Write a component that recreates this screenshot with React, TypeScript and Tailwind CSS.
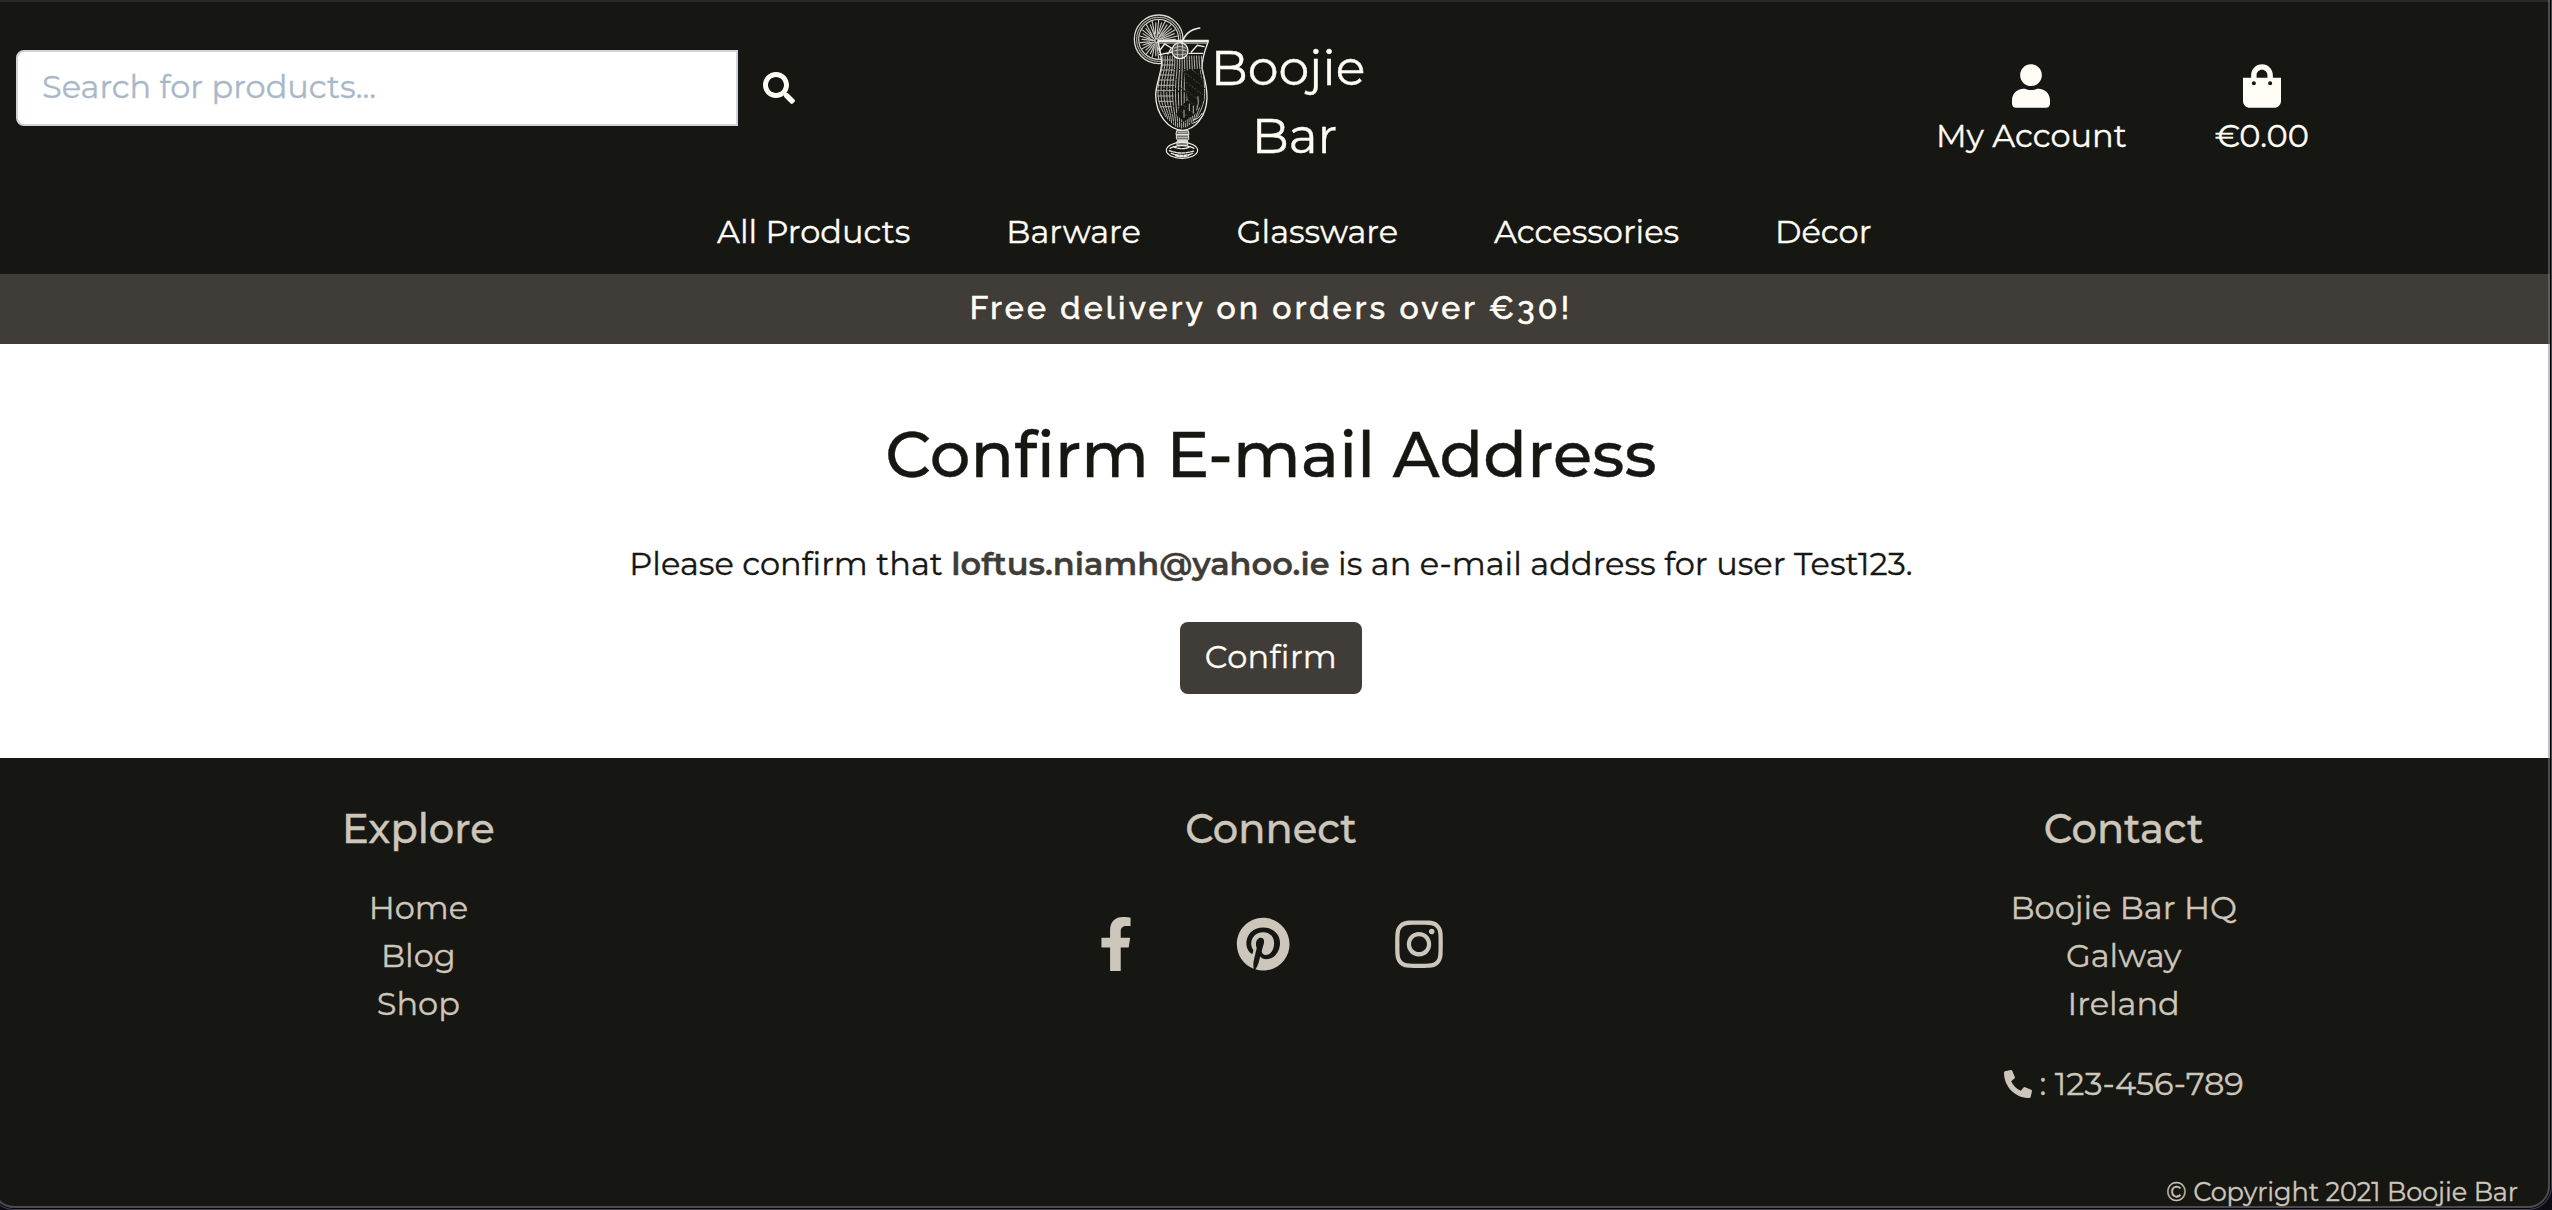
import { FaFacebookF, FaInstagram, FaPhoneAlt, FaPinterest, FaSearch, FaShoppingBag, FaUser } from "react-icons/fa";

const NAV = ["All Products", "Barware", "Glassware", "Accessories", "Décor"];

const rays = Array.from({ length: 36 }, (_, i) => {
  const a = (i / 36) * Math.PI * 2;
  const r0 = 5 + (i % 3) * 8;
  const r1 = 50 + (i % 2) * 7;
  return { x1: 140 + r0 * Math.cos(a), y1: 122 + r0 * Math.sin(a), x2: 146 + r1 * Math.cos(a), y2: 118 + r1 * Math.sin(a) };
});

// Vertical hatching inside the glass, following the hurricane shape
const hatch = Array.from({ length: 17 }, (_, i) => {
  const t = i / 16;
  const top = 158 + t * 116;
  const mid = 144 + t * 140;
  const low = 190 + t * 52;
  const end = 350 + 34 * Math.sin(t * Math.PI);
  return `M${top} 168 C${top + 2} 215 ${mid} 225 ${mid} 280 C${mid} 320 ${(mid + low) / 2} 345 ${(mid + low) / 2} ${end}`;
});

const dots = Array.from({ length: 90 }, (_, i) => ({
  x: 212 + ((i * 37) % 66),
  y: 210 + ((i * 53) % 150),
}));

function Cocktail() {
  return (
    <svg viewBox="66 36 240 450" className="h-[150px] w-[80px] shrink-0" fill="none" stroke="#eeece6" strokeLinecap="round">
      <circle cx="146" cy="118" r="73" strokeWidth="4" stroke="#dad8d2" />
      <circle cx="146" cy="118" r="66" strokeWidth="4" stroke="#9c9b95" strokeDasharray="5 3" />
      <circle cx="146" cy="118" r="60" strokeWidth="3.5" stroke="#cfcdc7" />
      {rays.map((r, i) => (
        <line key={i} {...r} strokeWidth="3.4" stroke="#cac8c2" />
      ))}
      <path d="M144 124 H295 C285 150 276 170 276 205 C282 235 292 255 291 295 C289 350 255 388 218 391 C175 388 138 345 137 285 C138 250 153 225 155 190 C154 165 148 145 144 124Z" fill="#161613" strokeWidth="4" />
      <path d="M144 121 H295 M146 129 H291" strokeWidth="3.5" />
      <path d="M148 164 L188 156 M237 160 H278 M150 150 l14 -18 20 12 -10 18 M244 156 l18 -20 20 4" strokeWidth="4" />
      {hatch.map((d, i) => (
        <path key={i} d={d} strokeWidth="2.8" stroke="#bebcb6" strokeDasharray={i % 2 ? "38 5 60 7" : "70 4 22 5"} />
      ))}
      <path d="M222 212 L268 206 278 250 281 300 258 340 222 365 200 345 208 322 234 300 226 262Z" fill="#161613" stroke="none" />
      <path d="M238 312 v20 M222 330 v22 M264 290 q4 20 -4 40 M250 318 v22" strokeWidth="2.8" stroke="#bebcb6" />
      {dots.map((d, i) => (
        <circle key={i} cx={d.x} cy={d.y} r="1.2" fill="#85847d" stroke="none" />
      ))}
      <path d="M156 180 h34 M156 195 h34 M154 210 h38 M152 225 h40 M148 240 h44 M144 256 h48 M143 272 h48 M143 288 h46 M146 304 h42 M150 320 h34" strokeWidth="3" stroke="#b3b1ab" />
      <path d="M250 360 q18 -4 26 -20 M248 370 q20 -6 32 -26" strokeWidth="2.8" />
      <circle cx="210" cy="152" r="24" fill="#4d4c48" strokeWidth="4" />
      <path d="M192 145 q18 -12 36 0 M190 153 q20 -8 40 0 M193 162 q18 6 34 0 M203 131 q-4 20 0 42 M217 131 q4 20 0 42" strokeWidth="2" />
      <path d="M216 130 C222 106 240 88 269 84" strokeWidth="5" />
      <path d="M201 392 h34 l2 12 h-38z M199 406 q-2 10 4 16 h30 q6 -6 2 -16z M202 424 h31 v12 h-31z" strokeWidth="3" fill="#6b6a65" />
      <path d="M205 398 h26 M204 412 h28 M206 418 h24" strokeWidth="2" />
      <ellipse cx="216" cy="451" rx="47" ry="24" strokeWidth="3.5" />
      <path d="M180 445 q36 -16 72 0 M178 452 q38 14 76 0 M184 460 q32 12 64 0 M196 467 q20 6 40 0 M190 440 q26 12 52 0" strokeWidth="4" strokeDasharray="9 4" />
    </svg>
  );
}

export default function App() {
  return (
    <div className="relative flex h-[1210px] w-[2552px] flex-col overflow-hidden bg-white font-['Montserrat','Inter',sans-serif] text-[32px] leading-[48px] text-[#161613] [-webkit-text-stroke:0.35px] [font-variant-ligatures:none]">
      <header className="h-[274px] shrink-0 border-t-2 border-[#2a2a2a] bg-[#161613] text-[#fffdf5]">
        <div className="flex h-[206px] items-start">
          <div className="ml-4 mt-12 flex items-center">
            <div className="flex h-[76px] w-[722px] items-center rounded-l-[8px] border-2 border-[#ced4da] bg-white pb-[2px] pl-6 text-[#a9b8c9]">
              Search for products...
            </div>
            <FaSearch className="ml-[25px] size-8" />
          </div>
          <div className="ml-[337px] mt-[10px] flex items-start">
            <Cocktail />
            <div className="-ml-1 mt-[22px] w-[160px] text-center text-[49px] leading-[68px]">
              <div>Boojie</div>
              <div className="pl-[13px]">Bar</div>
            </div>
          </div>
          <div className="ml-[568px] mt-[62px] flex gap-[88px]">
            <div className="flex flex-col items-center">
              <FaUser className="mb-1 h-[44px] w-[38px]" />
              <span className="whitespace-nowrap">My Account</span>
            </div>
            <div className="flex flex-col items-center">
              <FaShoppingBag className="mb-1 h-[44px] w-[38px]" />
              <span>€0.00</span>
            </div>
          </div>
        </div>
        <nav className="flex gap-24 whitespace-nowrap pl-[717px]">
          {NAV.map((n) => (
            <a key={n}>{n}</a>
          ))}
        </nav>
      </header>

      <div className="h-[70px] shrink-0 bg-[#403c37] pr-[10px] pt-[10px] text-center font-['Raleway','Lato',sans-serif] font-medium tracking-[3.2px] text-[#fffdf5] [-webkit-text-stroke:0.6px]">
        Free delivery on orders over €30!
      </div>

      <main className="flex h-[414px] shrink-0 flex-col items-center pr-[10px] pt-[72px]">
        <h1 className="text-[64px] font-medium leading-[76px] tracking-[0.2px]">Confirm E-mail Address</h1>
        <p className="mt-[48px] tracking-[0.03px]">
          Please confirm that <strong className="font-semibold text-[#403c37]">loftus.niamh@yahoo.ie</strong> is an e-mail address for user Test123.
        </p>
        <button className="mt-[34px] h-[72px] w-[182px] rounded-[8px] bg-[#403c37] pb-[2px] tracking-[0.4px] text-[#fffdf5]">Confirm</button>
      </main>

      <footer className="h-[452px] shrink-0 bg-[#161613] pt-[47px] text-[#cdc6ba]">
        <div className="-ml-[8px] grid h-[368px] w-[2558px] grid-cols-3 text-center">
          <div>
            <h2 className="mb-[31px] text-[40px] font-medium">Explore</h2>
            <div>Home</div>
            <div>Blog</div>
            <div>Shop</div>
          </div>
          <div>
            <h2 className="mb-[64px] text-[40px] font-medium">Connect</h2>
            <div className="flex justify-center text-[54.4px]">
              <FaFacebookF className="w-[34px]" />
              <FaPinterest className="ml-[103px]" />
              <FaInstagram className="ml-[104px] w-[48px]" />
            </div>
          </div>
          <div>
            <h2 className="mb-[31px] text-[40px] font-medium">Contact</h2>
            <div>Boojie Bar HQ</div>
            <div>Galway</div>
            <div>Ireland</div>
            <div className="mt-8 flex items-center justify-center gap-2">
              <FaPhoneAlt className="size-7" />
              <span>: 123-456-789</span>
            </div>
          </div>
        </div>
        <div className="pr-[34px] text-right text-[25.6px] leading-[38px] tracking-[-0.1px]">© Copyright 2021 Boojie Bar</div>
      </footer>

      <div className="pointer-events-none absolute -top-10 bottom-[2px] -left-2 right-[2px] rounded-b-[22px] border-2 border-[#80808080] shadow-[0_0_0_1px_#000,0_0_0_2px_#4a4260,0_0_0_40px_#0d0b14]" />
    </div>
  );
}
